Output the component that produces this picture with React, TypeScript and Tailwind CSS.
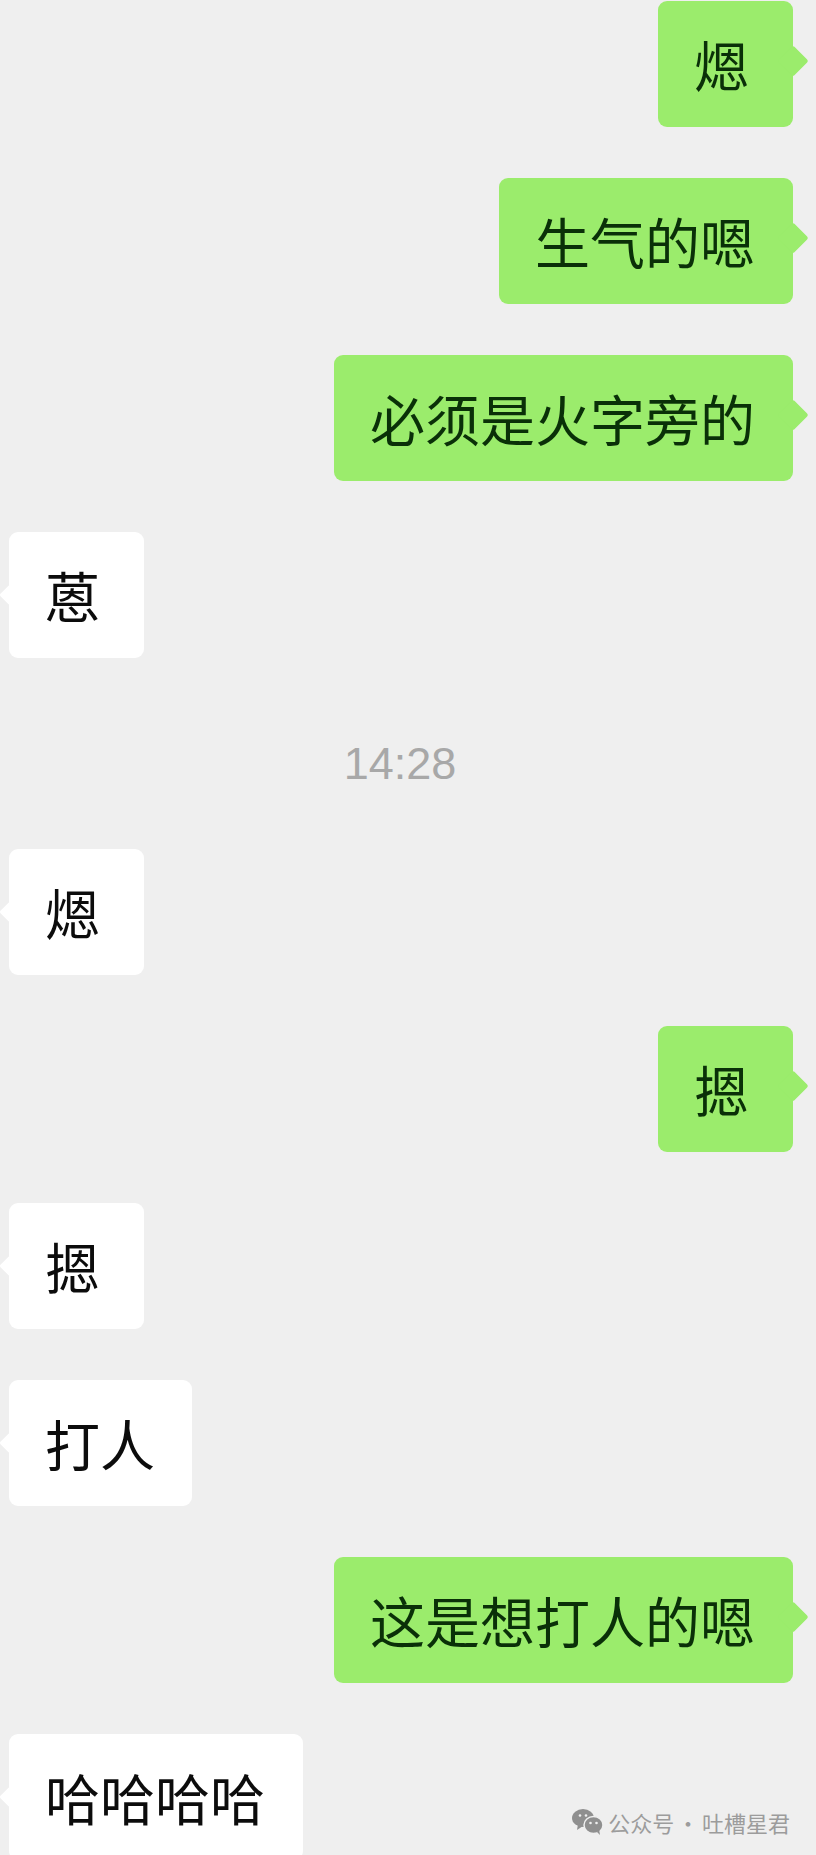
const cjk = "font-['Noto_Sans_CJK_SC','Noto_Sans',sans-serif]"

function Bubble(props: { text: string; width: string; mine?: boolean }) {
  const { text, width, mine } = props
  return (
    <div className={mine ? "flex justify-end pr-[23px]" : "flex justify-start pl-[9px]"}>
      <div
        className={
          (mine
            ? "relative flex h-[126px] items-center rounded-[9px] bg-[#9bec6c] pl-[36px] text-[55px] text-[#0a3008] "
            : "relative flex h-[126px] items-center rounded-[9px] bg-white pl-[36px] text-[55px] text-[#0c0c0c] ") +
          width
        }
      >
        {mine ? (
          <span className="absolute -right-[11px] top-[49px] h-[22px] w-[22px] rotate-45 rounded-[2px] bg-[#9bec6c]" />
        ) : (
          <span className="absolute -left-[6px] top-[54px] h-[18px] w-[18px] rotate-45 rounded-[2px] bg-white" />
        )}
        <span className="relative -top-px whitespace-nowrap leading-none">{text}</span>
      </div>
    </div>
  )
}

function WechatIcon() {
  return (
    <svg width="31" height="26" viewBox="0 0 31 26" fill="#8f8f8f">
      <ellipse cx="11" cy="9" rx="11" ry="9" />
      <path d="M6 15l-1 6 6-4z" />
      <ellipse cx="21.5" cy="16" rx="9.5" ry="8.5" stroke="#efefef" strokeWidth="1.5" />
      <path d="M25 23l3 3-1-6z" />
      <circle cx="8" cy="6.5" r="1.3" fill="#efefef" />
      <circle cx="14" cy="6.5" r="1.3" fill="#efefef" />
      <circle cx="18.5" cy="14" r="1.3" fill="#efefef" />
      <circle cx="24.5" cy="14" r="1.3" fill="#efefef" />
    </svg>
  )
}

export default function App() {
  return (
    <div className={`relative h-[1855px] w-[816px] overflow-hidden bg-[#efefef] ${cjk}`}>
      <div className="flex flex-col gap-[51px] pt-px">
        <Bubble mine width="w-[135px]" text="煾" />
        <Bubble mine width="w-[294px]" text="生气的嗯" />
        <Bubble mine width="w-[459px]" text="必须是火字旁的" />
        <Bubble width="w-[135px]" text="蒽" />
        <div className="flex h-[89px] items-center justify-center pt-[20px] pr-[16px] font-['Liberation_Sans',sans-serif] text-[45px] text-[#a8a8a8]">
          14:28
        </div>
        <Bubble width="w-[135px]" text="煾" />
        <Bubble mine width="w-[135px]" text="摁" />
        <Bubble width="w-[135px]" text="摁" />
        <Bubble width="w-[183px]" text="打人" />
        <Bubble mine width="w-[459px]" text="这是想打人的嗯" />
        <Bubble width="w-[294px]" text="哈哈哈哈" />
      </div>

      {/* marca d'água */}
      <div className="absolute bottom-[20px] right-[26px] flex items-center gap-[5px] text-[22px] leading-none text-[#9c9c9c]">
        <WechatIcon />
        <span className="whitespace-nowrap [word-spacing:-2px]">公众号 · 吐槽星君</span>
      </div>
    </div>
  )
}
